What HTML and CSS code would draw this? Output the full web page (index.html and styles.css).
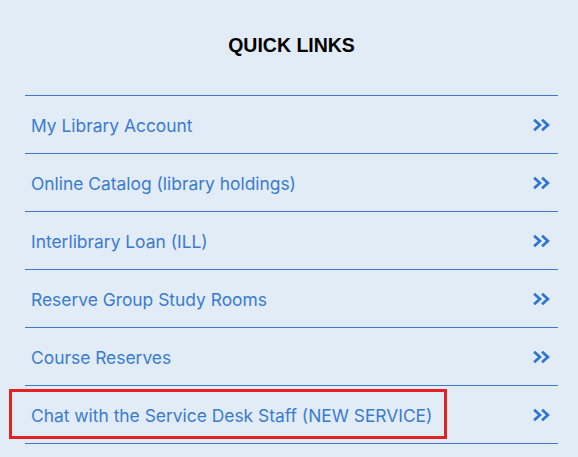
FILE: index.html
```html
<!DOCTYPE html>
<html lang="en">
<head>
    <meta charset="UTF-8">
    <meta name="viewport" content="width=device-width, initial-scale=1.0">
    <title>Quick Links</title>
    <link rel="stylesheet" href="styles.css">
</head>
<body>
    <div class="quick-links">
        <h2>QUICK LINKS</h2>

        <ul class="link-list">
            <li><a href="#"><span>My Library Account</span><svg class="chevron" viewBox="0 0 17 13"><path d="M2 1.5 L7.5 6.5 L2 11.5 M9.5 1.5 L15 6.5 L9.5 11.5"/></svg></a></li>
            <li><a href="#"><span>Online Catalog (library holdings)</span><svg class="chevron" viewBox="0 0 17 13"><path d="M2 1.5 L7.5 6.5 L2 11.5 M9.5 1.5 L15 6.5 L9.5 11.5"/></svg></a></li>
            <li><a href="#"><span>Interlibrary Loan (ILL)</span><svg class="chevron" viewBox="0 0 17 13"><path d="M2 1.5 L7.5 6.5 L2 11.5 M9.5 1.5 L15 6.5 L9.5 11.5"/></svg></a></li>
            <li><a href="#"><span>Reserve Group Study Rooms</span><svg class="chevron" viewBox="0 0 17 13"><path d="M2 1.5 L7.5 6.5 L2 11.5 M9.5 1.5 L15 6.5 L9.5 11.5"/></svg></a></li>
            <li><a href="#"><span>Course Reserves</span><svg class="chevron" viewBox="0 0 17 13"><path d="M2 1.5 L7.5 6.5 L2 11.5 M9.5 1.5 L15 6.5 L9.5 11.5"/></svg></a></li>
            <li class="highlight"><a href="#"><span>Chat with the Service Desk Staff (NEW SERVICE)</span><svg class="chevron" viewBox="0 0 17 13"><path d="M2 1.5 L7.5 6.5 L2 11.5 M9.5 1.5 L15 6.5 L9.5 11.5"/></svg></a></li>
        </ul>
    </div>
</body>
</html>
```

FILE: styles.css
```css
body {
    margin: 0;
    background-color: #e2ecf6;
    font-family: Inter, 'Noto Sans', sans-serif;
}

.quick-links {
    margin: 0 20px 0 25px;
    padding-top: 34px;
}

h2 {
    margin: 0 0 39px;
    text-align: center;
    font-family: 'Liberation Sans', Arial, sans-serif;
    font-size: 19.5px;
    font-weight: bold;
    line-height: 22px;
    color: #000;
}

.link-list {
    list-style: none;
    margin: 0;
    padding: 0;
    border-top: 1px solid #3c7ac8;
}

.link-list li {
    position: relative;
    border-bottom: 1px solid #3c7ac8;
}

.link-list a {
    display: flex;
    justify-content: space-between;
    align-items: center;
    height: 57px;
    padding: 0 8px 0 6px;
    color: #3a7bd0;
    text-decoration: none;
    font-size: 17.4px;
}

.link-list a span {
    padding-top: 2px;
}

.chevron {
    width: 18px;
    height: 14px;
    fill: none;
    stroke: #2f74d0;
    stroke-width: 2.6;
}

/* red annotation box over the new service row */
.highlight::after {
    content: '';
    position: absolute;
    left: -16px;
    top: 3px;
    width: 432px;
    height: 44px;
    border: 3px solid #e52222;
    pointer-events: none;
}
```
